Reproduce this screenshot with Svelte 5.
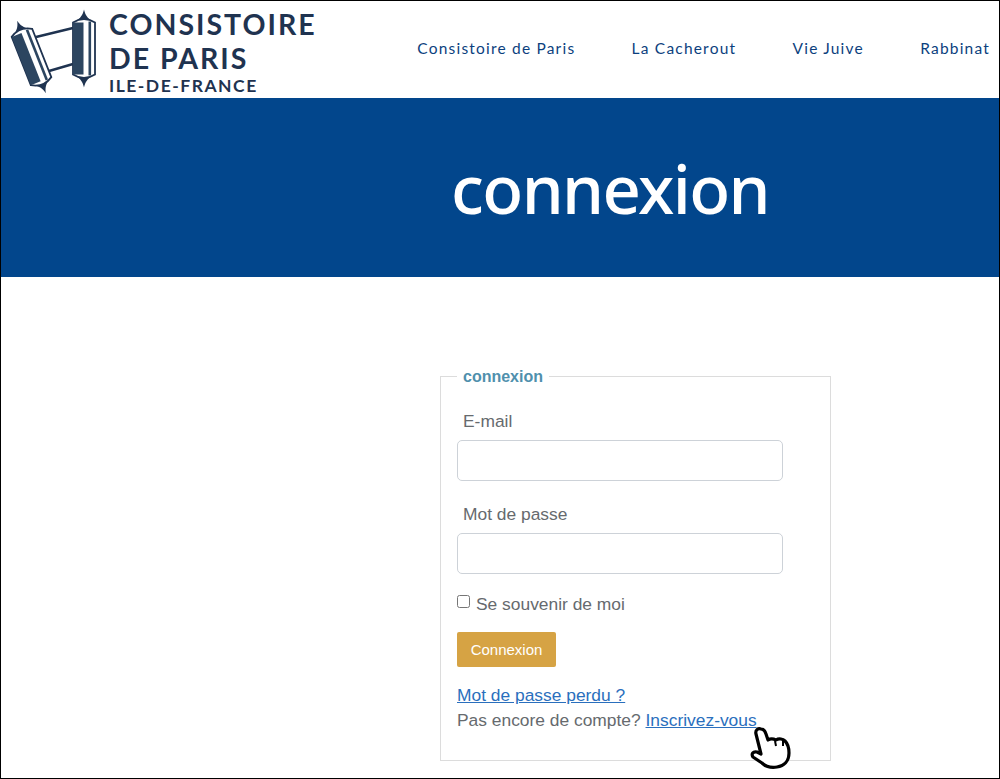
<script lang="ts">
	const links = ['Consistoire de Paris', 'La Cacherout', 'Vie Juive', 'Rabbinat'];
</script>

{#snippet roll()}
	<path d="M0 -39 C-1 -35 -2 -32 -7 -28 L7 -28 C2 -32 1 -35 0 -39 Z M0 39 C-1 35 -2 32 -7 28 L7 28 C2 32 1 35 0 39 Z" fill="#1f3350" />
	<path d="M-11 -26 Q0 -33 11 -26 L11 26 Q0 33 -11 26 Z" fill="#fff" stroke="#1f3350" stroke-width="1.8" />
	<rect x="-11" y="-26" width="10.5" height="52" fill="#2c4560" />
	<rect x="4.5" y="-27" width="2.6" height="54" fill="#2c4560" />
{/snippet}

<div class="page">
	<header class="top">
		<a class="logo" href="#home">
			<svg class="scroll" viewBox="10 1 97 96" width="97" height="96" aria-hidden="true">
				<!-- rods between the two rolls -->
				<path d="M36 37 L73 28 M49 71 L73 64" stroke="#1f3350" stroke-width="2.4" fill="none" />
				<g transform="translate(31.5 57) rotate(-21.6)">
					{@render roll()}
				</g>
				<g transform="translate(84 48.5)">
					{@render roll()}
				</g>
			</svg>
			<span class="wordmark">
				<span class="big">CONSISTOIRE</span>
				<span class="big">DE PARIS</span>
				<span class="small">ILE-DE-FRANCE</span>
			</span>
		</a>
		<nav>
			{#each links as link}
				<a href="#{link}">{link}</a>
			{/each}
		</nav>
	</header>

	<section class="banner">
		<h1>connexion</h1>
	</section>

	<main>
		<fieldset>
			<legend>connexion</legend>
			<label class="field">
				<span>E-mail</span>
				<input type="email" />
			</label>
			<label class="field">
				<span>Mot de passe</span>
				<input type="password" />
			</label>
			<label class="remember">
				<input type="checkbox" />
				<span>Se souvenir de moi</span>
			</label>
			<button type="button">Connexion</button>
			<div class="links">
				<a class="lost" href="#lost">Mot de passe perdu ?</a>
				<p>
					Pas encore de compte?
					<span class="signup">
						<a href="#signup">Inscrivez-vous</a>
						<svg class="hand" viewBox="0 0 60 60" width="60" height="60" aria-hidden="true">
							<path
								d="M16 18 C15 14 18 12 21 13 C24 13 25 15 26 18 L28 24 C31 22 34 23 36 24 C39 22 43 23 45 25 C48 28 49 32 49 37 C49 45 44 50 37 51 C30 52 26 51 22 47 L13 41 C11 38 13 35 17 36 L21 38 Z"
								fill="#fff"
								stroke="#000"
								stroke-width="3.2"
								stroke-linejoin="round"
							/>
							<path d="M35 25 L36 30 M43 25 L43 30" stroke="#000" stroke-width="2" fill="none" />
						</svg>
					</span>
				</p>
			</div>
		</fieldset>
	</main>
</div>

<style>
	:global(body) {
		background: #fff;
	}
	.page {
		box-sizing: border-box;
		width: 1000px;
		height: 779px;
		border: 1px solid #000;
		overflow: hidden;
		background: #fff;
		font-family: 'Liberation Sans', Arial, sans-serif;
	}
	.top {
		display: flex;
		justify-content: space-between;
		align-items: flex-start;
		height: 97px;
	}
	.logo {
		display: flex;
		text-decoration: none;
		color: #1f3350;
		margin-left: 9px;
	}
	.wordmark {
		display: flex;
		flex-direction: column;
		margin: 6px 0 0 2px;
		font-family: Lato, sans-serif;
		font-weight: 700;
	}
	.big {
		font-size: 28.5px;
		line-height: 34px;
		letter-spacing: 2px;
	}
	.small {
		font-size: 17.5px;
		line-height: 22px;
		letter-spacing: 1.5px;
	}
	nav {
		display: flex;
		gap: 56.3px;
		margin: 37px 9px 0 0;
	}
	nav a {
		font-family: Lato, sans-serif;
		font-size: 15.5px;
		line-height: 20px;
		letter-spacing: 1.2px;
		color: #0c3f7e;
		text-decoration: none;
	}
	.banner {
		height: 179px;
		background: #02468c;
		display: flex;
		align-items: center;
		justify-content: center;
		padding-left: 220px;
		box-sizing: border-box;
	}
	h1 {
		margin: 0;
		font-family: 'Noto Sans', sans-serif;
		font-weight: 500;
		font-size: 67px;
		line-height: 80px;
		letter-spacing: -1.6px;
		color: #fff;
	}
	main {
		padding: 89px 0 0 439px;
	}
	fieldset {
		box-sizing: border-box;
		width: 391px;
		height: 395px;
		margin: 0;
		padding: 0 16px;
		border: 1px solid #dcdcdc;
		color: #666a6e;
		font-size: 17.4px;
	}
	legend {
		margin-left: 0;
		padding: 2px 6px 0;
		font-size: 16px;
		font-weight: 700;
		line-height: 18px;
		color: #4f90ad;
	}
	.field {
		display: block;
		margin-top: 25px;
	}
	.field + .field {
		margin-top: 23px;
	}
	.field span {
		display: block;
		margin-left: 6px;
		line-height: 20px;
	}
	.field input {
		display: block;
		box-sizing: border-box;
		width: 326px;
		height: 41px;
		margin-top: 9px;
		border: 1px solid #cdd2d8;
		border-radius: 5px;
		background: #fff;
	}
	.remember {
		display: flex;
		align-items: flex-start;
		margin-top: 20px;
		line-height: 20px;
	}
	.remember input {
		width: 13px;
		height: 13px;
		margin: 1px 6px 0 0;
	}
	button {
		display: block;
		box-sizing: border-box;
		width: 99px;
		height: 35px;
		margin-top: 18px;
		padding: 0;
		border: 0;
		border-radius: 2px;
		background: #d6a344;
		color: #fff;
		font: 15px 'Liberation Sans', Arial, sans-serif;
	}
	.links {
		margin-top: 16px;
		line-height: 25px;
	}
	.links a {
		color: #2a6fbd;
	}
	.lost {
		display: inline-block;
	}
	.links p {
		margin: 0;
		line-height: 24px;
	}
	.signup {
		position: relative;
	}
	.hand {
		position: absolute;
		left: 94px;
		top: 6px;
	}
</style>
